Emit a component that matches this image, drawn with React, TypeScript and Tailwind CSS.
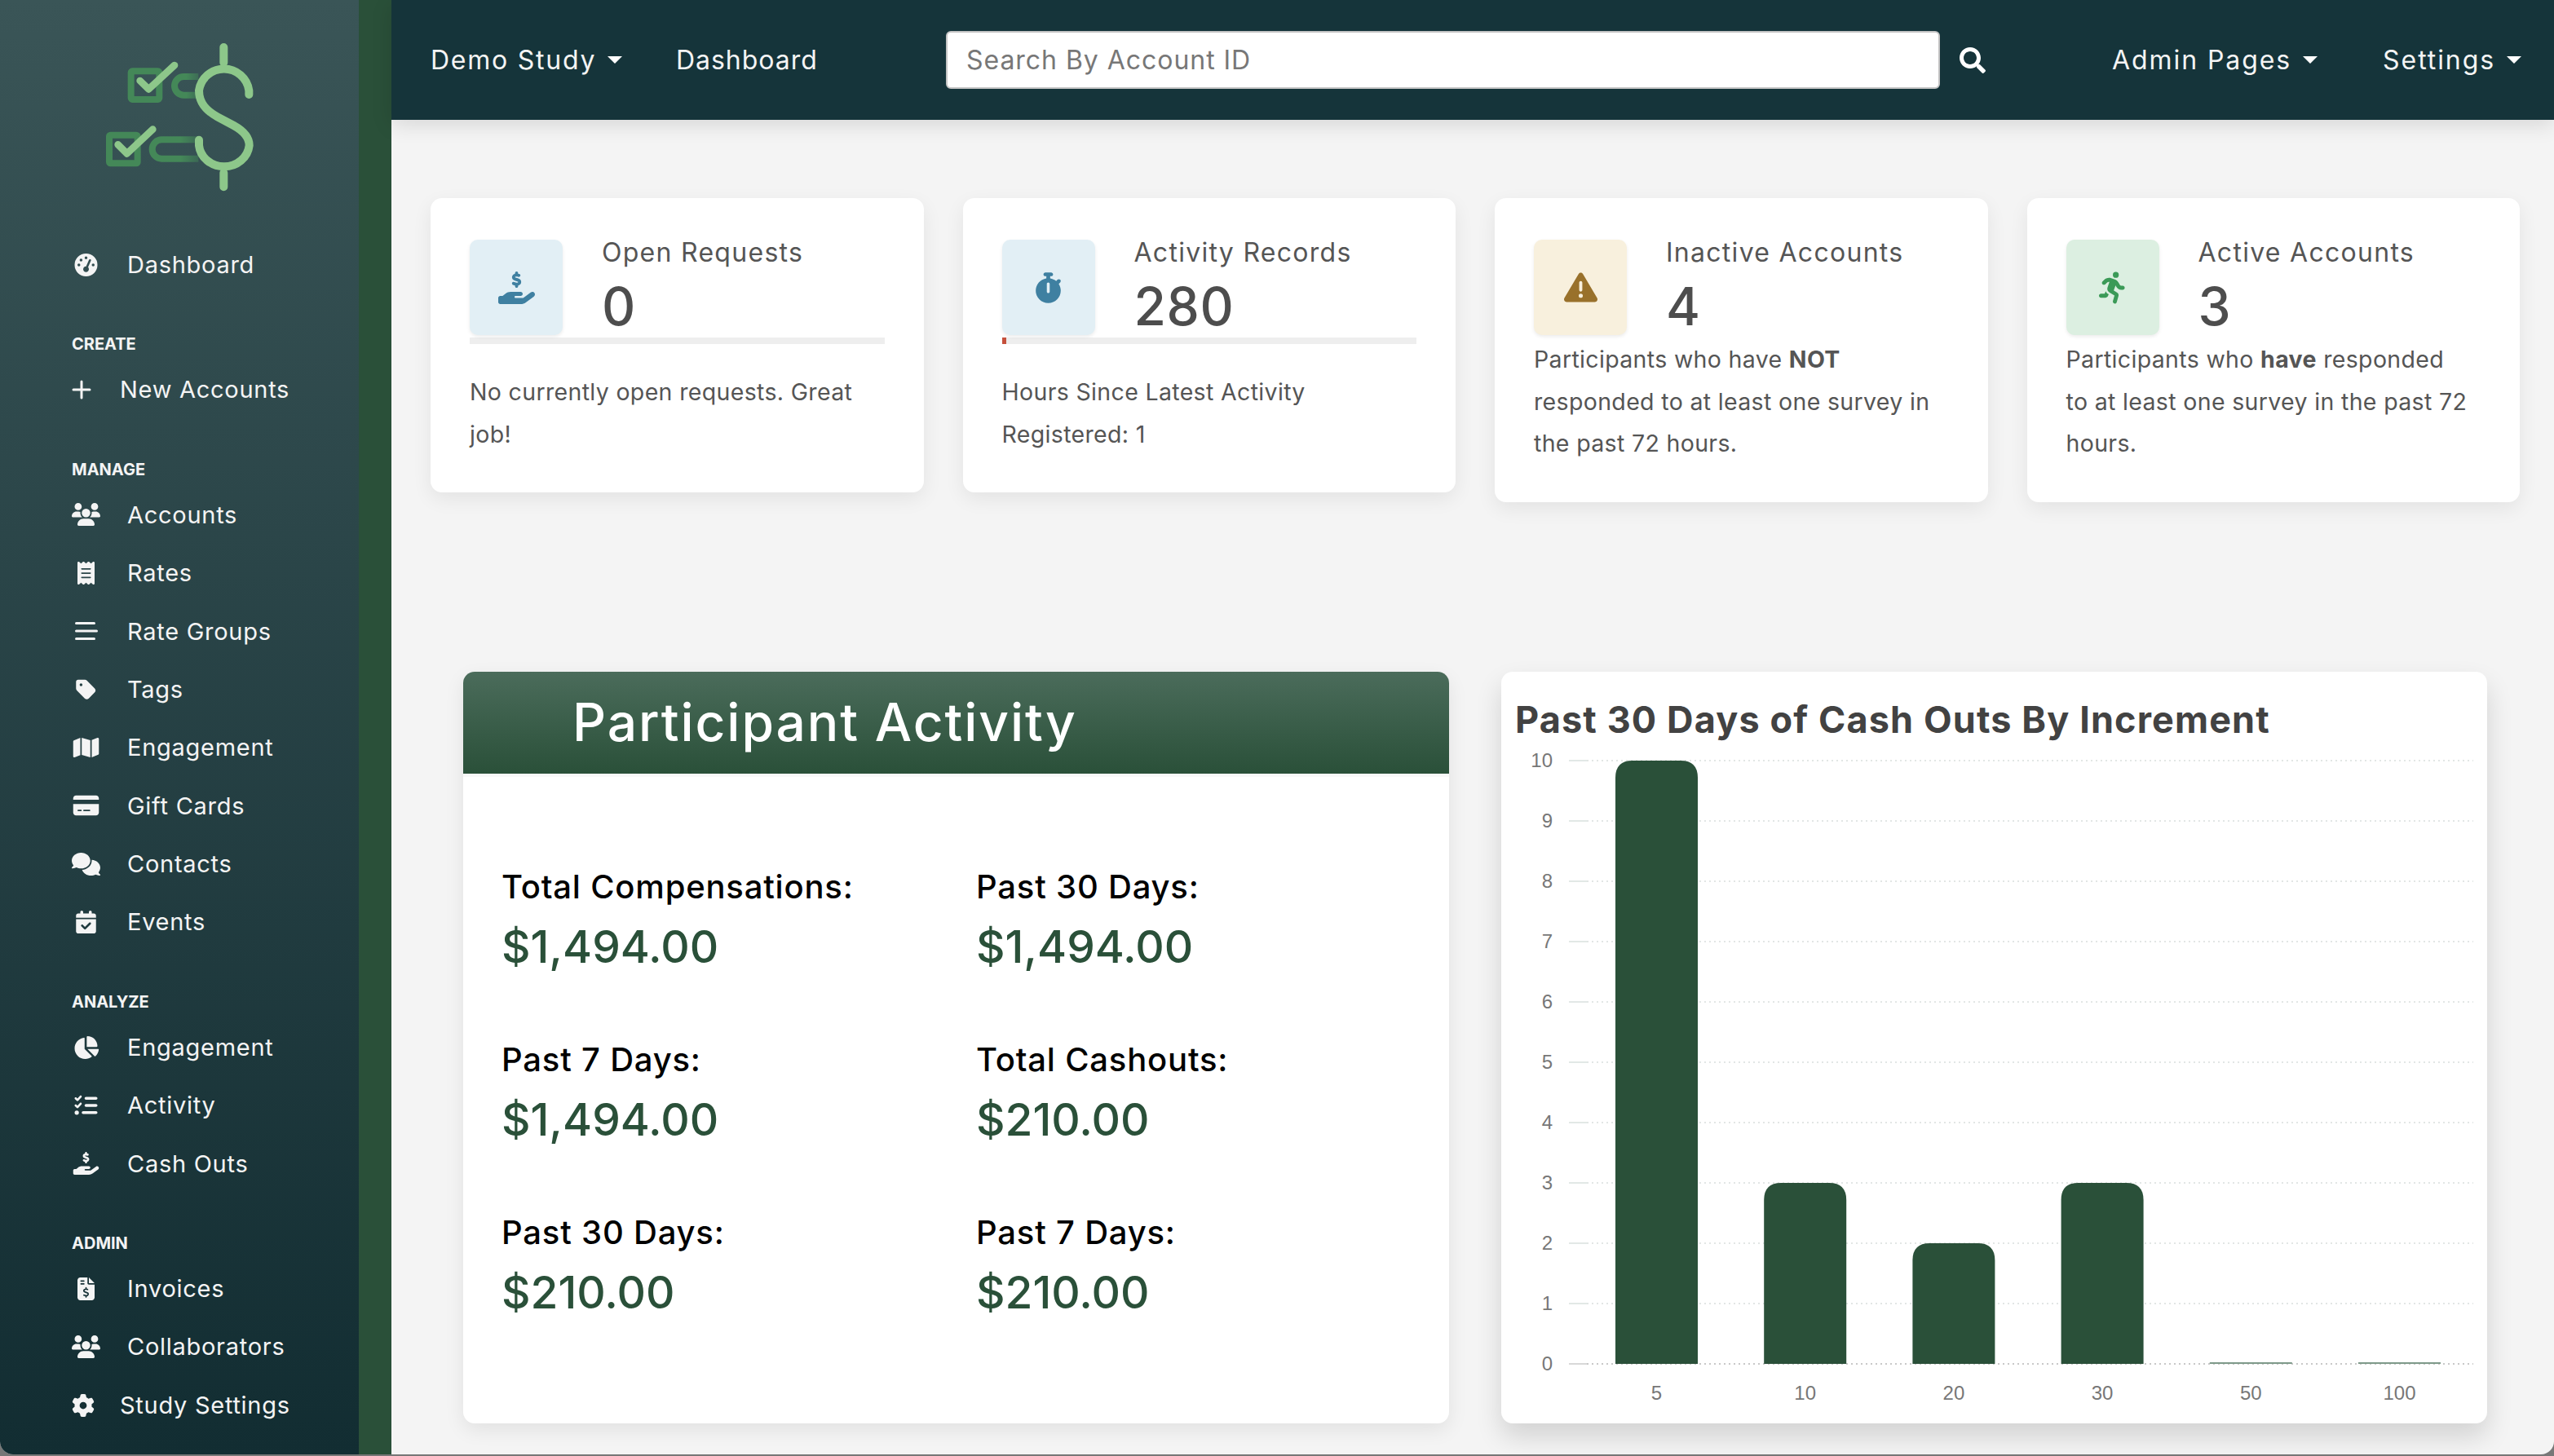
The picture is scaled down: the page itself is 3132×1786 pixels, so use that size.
import type { ReactNode } from 'react';
import {
  FaGaugeHigh, FaUsers, FaReceipt, FaTag, FaMap, FaCreditCard, FaComments, FaCalendarCheck,
  FaChartPie, FaListCheck, FaHandHoldingDollar, FaFileInvoiceDollar, FaGear, FaStopwatch,
  FaTriangleExclamation, FaPersonRunning,
} from 'react-icons/fa6';
import { FaSearch } from 'react-icons/fa';

const iconCls = 'w-[35px] h-[28px]';

function LinesIcon() {
  return (
    <svg viewBox="0 0 35 28" className={iconCls} fill="currentColor">
      <rect x="4" y="3" width="25" height="3" rx="1.5" />
      <rect x="4" y="12.5" width="28" height="3" rx="1.5" />
      <rect x="4" y="22" width="25" height="3" rx="1.5" />
    </svg>
  );
}

function PlusIcon() {
  return (
    <svg viewBox="0 0 24 24" className="w-[24px] h-[24px]" stroke="currentColor" strokeWidth="3" strokeLinecap="round">
      <path d="M12 2v20M2 12h20" />
    </svg>
  );
}

function Logo() {
  return (
    <svg viewBox="0 0 720 660" className="w-[240px] h-[220px]" fill="none">
      <defs>
        <linearGradient id="pillA" x1="330" x2="440" y1="0" y2="0" gradientUnits="userSpaceOnUse">
          <stop offset="0" stopColor="#448858" />
          <stop offset="0.5" stopColor="#448858" />
          <stop offset="1" stopColor="#448858" stopOpacity="0.35" />
        </linearGradient>
        <linearGradient id="pillB" x1="250" x2="440" y1="0" y2="0" gradientUnits="userSpaceOnUse">
          <stop offset="0" stopColor="#448858" />
          <stop offset="0.6" stopColor="#448858" />
          <stop offset="1" stopColor="#448858" stopOpacity="0.35" />
        </linearGradient>
      </defs>
      <rect x="182" y="172" width="104" height="104" rx="5" stroke="#448858" strokeWidth="24" />
      <rect x="102" y="407" width="104" height="104" rx="5" stroke="#448858" strokeWidth="24" />
      <path d="M430 192H376a33 33 0 0 0 0 68H430" stroke="url(#pillA)" strokeWidth="24" />
      <path d="M430 424H295a33 33 0 0 0 0 70H430" stroke="url(#pillB)" strokeWidth="24" />
      <g stroke="#8dc78a" strokeLinecap="round" strokeLinejoin="round">
        <path d="M215 207L247 238L342 150" strokeWidth="26" />
        <path d="M134 442L167 475L262 386" strokeWidth="26" />
        <path d="M523 84V140M523 546V598" strokeWidth="30" />
        <path
          d="M616 258V243A93 93 0 0 0 432 243C432 290 460 318 500 340L560 372C596 392 617 415 617 445A93 87 0 0 1 432 445V425"
          strokeWidth="30"
        />
      </g>
    </svg>
  );
}

interface NavEntry {
  label: string;
  icon: ReactNode;
  narrow?: boolean;
}

const NAV: { title: string; items: NavEntry[] }[] = [
  { title: 'Create', items: [{ label: 'New Accounts', icon: <PlusIcon />, narrow: true }] },
  {
    title: 'Manage',
    items: [
      { label: 'Accounts', icon: <FaUsers className={iconCls} /> },
      { label: 'Rates', icon: <FaReceipt className={iconCls} /> },
      { label: 'Rate Groups', icon: <LinesIcon /> },
      { label: 'Tags', icon: <FaTag className={iconCls} /> },
      { label: 'Engagement', icon: <FaMap className={iconCls} /> },
      { label: 'Gift Cards', icon: <FaCreditCard className={iconCls} /> },
      { label: 'Contacts', icon: <FaComments className={iconCls} /> },
      { label: 'Events', icon: <FaCalendarCheck className={iconCls} /> },
    ],
  },
  {
    title: 'Analyze',
    items: [
      { label: 'Engagement', icon: <FaChartPie className={iconCls} /> },
      { label: 'Activity', icon: <FaListCheck className={iconCls} /> },
      { label: 'Cash Outs', icon: <FaHandHoldingDollar className={iconCls} /> },
    ],
  },
  {
    title: 'Admin',
    items: [
      { label: 'Invoices', icon: <FaFileInvoiceDollar className={iconCls} /> },
      { label: 'Collaborators', icon: <FaUsers className={iconCls} /> },
      { label: 'Study Settings', icon: <FaGear className="w-[28px] h-[28px]" />, narrow: true },
    ],
  },
];

function NavItem({ label, icon, narrow }: NavEntry) {
  return (
    <div className="flex items-center h-[71.4px] pl-[88px] text-[29px] tracking-[0.025em] text-[#f4f4f4]">
      <span className={`flex items-center ${narrow ? 'w-[59px]' : 'w-[68px]'}`}>{icon}</span>
      <span>{label}</span>
    </div>
  );
}

function Sidebar() {
  return (
    <aside className="w-[480px] shrink-0 flex flex-col border-r-[40px] border-[#2a5039] bg-gradient-to-b from-[#3a5557] to-[#122d32]">
      <div className="h-[289px] pt-[30px] pl-[100px]">
        <Logo />
      </div>
      <NavItem label="Dashboard" icon={<FaGaugeHigh className={iconCls} />} />
      {NAV.map((section) => (
        <section key={section.title} className="mt-[48px]">
          <div className="h-[28px] mb-[6px] pl-[88px] flex items-center text-[20px] font-bold uppercase text-[#f4f4f4]">
            {section.title}
          </div>
          {section.items.map((item) => (
            <NavItem key={item.label} {...item} />
          ))}
        </section>
      ))}
    </aside>
  );
}

function Caret() {
  return <span className="ml-[14px] border-x-[9px] border-t-[9px] border-x-transparent border-t-white" />;
}

function Topbar() {
  return (
    <header className="h-[147px] shrink-0 flex items-center bg-[#15343a] pl-[48px] pr-[40px] text-[32px] tracking-[0.03em] text-[#f4f4f4] shadow-[0_6px_24px_rgba(0,0,0,0.12)] relative z-10">
      <div className="flex items-center w-[301px] tracking-[0.055em]">
        Demo Study
        <Caret />
      </div>
      <div className="w-[331px]">Dashboard</div>
      <div className="w-[1219px] h-[71px] flex items-center rounded-[6px] bg-white border-2 border-[#c4c4c4] pl-[23px] text-[#777]">
        Search By Account ID
      </div>
      <FaSearch className="ml-[24px] w-[32px] h-[32px] text-white" />
      <div className="ml-auto flex items-center tracking-[0.06em]">
        Admin Pages
        <Caret />
      </div>
      <div className="ml-[80px] flex items-center tracking-[0.06em]">
        Settings
        <Caret />
      </div>
    </header>
  );
}

interface StatCardProps {
  title: string;
  value: string;
  icon: ReactNode;
  boxClass: string;
  progress?: number;
  children: ReactNode;
}

function StatCard({ title, value, icon, boxClass, progress, children }: StatCardProps) {
  const hasBar = progress !== undefined;
  return (
    <div className="bg-white rounded-[14px] shadow-[0_8px_24px_rgba(0,0,0,0.07)] pt-[51px] px-[48px] pb-[46px] text-[#555]">
      <div className="flex gap-[48px]">
        <div className={`w-[114px] h-[117px] rounded-[10px] flex items-center justify-center shadow-[0_2px_4px_rgba(0,0,0,0.08)] ${boxClass}`}>
          {icon}
        </div>
        <div>
          <div className="h-[32px] leading-[32px] text-[32px] tracking-[0.04em]">{title}</div>
          <div className="mt-[18px] text-[64px] leading-[64px] font-medium tracking-[0.01em] text-[#4d4d4d]">{value}</div>
        </div>
      </div>
      {hasBar && (
        <div className="mt-[3px] h-[8px] bg-[#eeeeee]">
          <div className="h-full bg-[#c5503c]" style={{ width: `${progress}%` }} />
        </div>
      )}
      <p className={`text-[28.5px] leading-[51.5px] tracking-[0.012em] whitespace-nowrap ${hasBar ? 'mt-[33px]' : 'mt-[4px]'}`}>
        {children}
      </p>
    </div>
  );
}

const TOTALS = [
  { label: 'Total Compensations:', value: '$1,494.00' },
  { label: 'Past 30 Days:', value: '$1,494.00' },
  { label: 'Past 7 Days:', value: '$1,494.00' },
  { label: 'Total Cashouts:', value: '$210.00' },
  { label: 'Past 30 Days:', value: '$210.00' },
  { label: 'Past 7 Days:', value: '$210.00' },
];

function ActivityCard() {
  return (
    <div className="h-[922px] rounded-[14px] bg-white shadow-[0_8px_24px_rgba(0,0,0,0.08)] overflow-hidden">
      <div className="h-[125px] flex items-center pl-[134px] bg-gradient-to-b from-[#4b6c5b] to-[#2a5039] text-[64px] font-medium tracking-[0.03em] text-white">
        Participant Activity
      </div>
      <div className="h-[4px] bg-[#f8f8f8]" />
      <div className="grid grid-cols-[582px_1fr] gap-y-[69px] pt-[105px] pl-[47px]">
        {TOTALS.map((t, i) => (
          <div key={i}>
            <div className="h-[60px] leading-[60px] text-[40px] font-medium tracking-[0.02em] text-black">{t.label}</div>
            <div className="mt-[3px] h-[80px] leading-[80px] text-[55px] font-medium text-[#2a5039]">{t.value}</div>
          </div>
        ))}
      </div>
    </div>
  );
}

const BARS = [
  { label: '5', value: 10 },
  { label: '10', value: 3 },
  { label: '20', value: 2 },
  { label: '30', value: 3 },
  { label: '50', value: 0 },
  { label: '100', value: 0 },
];
const TICKS = [10, 9, 8, 7, 6, 5, 4, 3, 2, 1, 0];

function CashOutChart() {
  const y0 = 760;
  const unit = 74;
  return (
    <svg viewBox="0 0 1209 833" className="w-[1209px] h-[833px] font-['Liberation_Sans',Arial,sans-serif]">
      {TICKS.map((t) => (
        <g key={t}>
          <line x1="83" x2="105" y1={y0 - t * unit} y2={y0 - t * unit} stroke={t === 0 ? '#d8d8d8' : '#e2e8e6'} strokeWidth="2" />
          <line x1="105" x2="1192" y1={y0 - t * unit} y2={y0 - t * unit} stroke={t === 0 ? '#c8c8c8' : '#e2e6e5'} strokeWidth="2" strokeDasharray="2 4" />
          <text x="63" y={y0 - t * unit + 8} textAnchor="end" fontSize="24" fill="#777">{t}</text>
        </g>
      ))}
      {BARS.map((b, i) => {
        const x = 140 + i * 182.2;
        const top = y0 - b.value * unit;
        return (
          <g key={b.label}>
            {b.value > 0 ? (
              <path
                d={`M${x} ${y0}V${top + 21}Q${x} ${top} ${x + 21} ${top}H${x + 80}Q${x + 101} ${top} ${x + 101} ${top + 21}V${y0}Z`}
                fill="#2a5039"
              />
            ) : (
              <rect x={x} y={y0 - 2} width="101" height="2" fill="#7f9a8a" />
            )}
            <text x={x + 50.5} y={y0 + 44} textAnchor="middle" fontSize="24" fill="#777">{b.label}</text>
          </g>
        );
      })}
    </svg>
  );
}

export default function App() {
  return (
    <div className="h-screen w-full overflow-hidden bg-[#777] pb-[2px] font-['Inter','Noto_Sans',sans-serif]">
      <div className="h-full flex rounded-b-[16px] overflow-hidden bg-[#f4f4f4]">
        <Sidebar />
        <div className="flex-1 min-w-0 flex flex-col">
          <Topbar />
          <main className="flex-1 pl-[48px] pr-[42px] pt-[96px]">
            <div className="grid grid-cols-4 gap-x-[48px] items-start">
              <StatCard
                title="Open Requests"
                value="0"
                progress={0}
                boxClass="bg-[#e2eff5]"
                icon={<FaHandHoldingDollar className="w-[45px] h-[40px] text-[#3f80a1]" />}
              >
                No currently open requests. Great
                <br />
                job!
              </StatCard>
              <StatCard
                title="Activity Records"
                value="280"
                progress={1}
                boxClass="bg-[#e2eff5]"
                icon={<FaStopwatch className="w-[33px] h-[40px] text-[#3f80a1]" />}
              >
                Hours Since Latest Activity
                <br />
                Registered: 1
              </StatCard>
              <StatCard
                title="Inactive Accounts"
                value="4"
                boxClass="bg-[#f8f0dd]"
                icon={<FaTriangleExclamation className="w-[41px] h-[41px] text-[#99712b]" />}
              >
                Participants who have <b>NOT</b>
                <br />
                responded to at least one survey in
                <br />
                the past 72 hours.
              </StatCard>
              <StatCard
                title="Active Accounts"
                value="3"
                boxClass="bg-[#dcefe1]"
                icon={<FaPersonRunning className="w-[34px] h-[42px] text-[#3b9a57]" />}
              >
                Participants who <b>have</b> responded
                <br />
                to at least one survey in the past 72
                <br />
                hours.
              </StatCard>
            </div>
            <div className="mt-[208px] ml-[40px] mr-[40px] grid grid-cols-2 gap-x-[64px]">
              <ActivityCard />
              <div className="h-[922px] rounded-[14px] bg-white shadow-[0_16px_32px_rgba(0,0,0,0.14)] pt-[29px]">
                <h2 className="h-[60px] leading-[60px] pl-[17px] text-[45px] font-bold tracking-[0.025em] text-[#424242]">
                  Past 30 Days of Cash Outs By Increment
                </h2>
                <CashOutChart />
              </div>
            </div>
          </main>
        </div>
      </div>
    </div>
  );
}
